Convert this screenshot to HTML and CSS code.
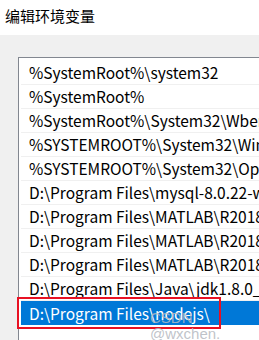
FILE: index.html
```html
<!DOCTYPE html>
<html lang="zh-CN">
<head>
    <meta charset="UTF-8">
    <title>编辑环境变量</title>
    <link rel="stylesheet" href="styles.css">
</head>
<body>
    <div class="title-bar">编辑环境变量</div>
    <div class="dialog">
        <div class="path-list">
            <div class="row">%SystemRoot%\system32</div>
            <div class="row">%SystemRoot%</div>
            <div class="row">%SystemRoot%\System32\Wbem</div>
            <div class="row">%SYSTEMROOT%\System32\WindowsPowerShell\v1.0\</div>
            <div class="row">%SYSTEMROOT%\System32\OpenSSH\</div>
            <div class="row">D:\Program Files\mysql-8.0.22-winx64\bin</div>
            <div class="row">D:\Program Files\MATLAB\R2018a\runtime\win64</div>
            <div class="row">D:\Program Files\MATLAB\R2018a\bin</div>
            <div class="row">D:\Program Files\MATLAB\R2018a\polyspace\bin</div>
            <div class="row">D:\Program Files\Java\jdk1.8.0_271\bin</div>
            <div class="row selected">
                D:\Program Files\nodejs\
                <span class="mark"></span>
            </div>
        </div>
        <div class="watermark">CSDN @wxchen.</div>
    </div>
</body>
</html>
```
FILE: styles.css
```css
body {
    margin: 0;
    width: 259px;
    height: 340px;
    overflow: hidden;
    font-family: "Microsoft YaHei", "Noto Sans CJK SC", sans-serif;
    background: #f0f0f0;
}

.title-bar {
    height: 35px;
    background: #fff;
    color: #000;
    font-size: 15px;
    line-height: 32px;
    padding-left: 5px;
}

.dialog {
    position: relative;
    padding: 22px 0 0 18px;
    height: 283px;
}

.path-list {
    width: 300px;
    height: 300px;
    background: #fff;
    border: 1px solid #828790;
    border-right: none;
    border-bottom: none;
    padding: 3px 0 0 0;
}

.row {
    position: relative;
    height: 23px;
    line-height: 23px;
    border-bottom: 1px solid #f0f0f0;
    padding-left: 8px;
    font-size: 15.5px;
    color: #000;
    white-space: nowrap;
    overflow: hidden;
    margin-left: 2px;
}

.row.selected {
    background: #0078d7;
    color: #fff;
    overflow: visible;
    border-bottom: none;
    height: 24px;
    line-height: 24px;
}

.mark {
    position: absolute;
    left: -4px;
    top: -4px;
    width: 200px;
    height: 28px;
    border: 2px solid #e81123;
}

.watermark {
    position: absolute;
    left: 150px;
    top: 275px;
    font-family: "Liberation Sans", sans-serif;
    font-size: 15px;
    line-height: 16px;
    color: rgba(180, 184, 192, 0.85);
}
```
